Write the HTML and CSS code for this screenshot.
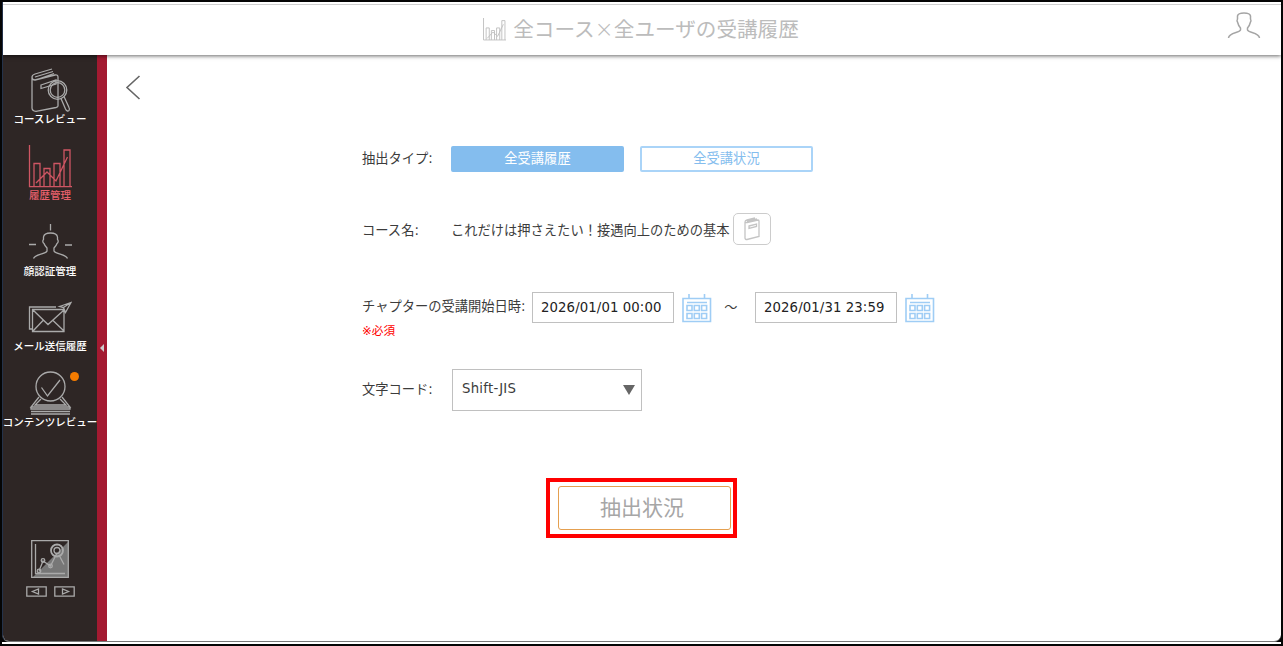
FILE: index.html
```html
<!DOCTYPE html>
<html lang="ja">

<head>
    <meta charset="UTF-8" />
    <title>全コース×全ユーザの受講履歴</title>
    <link rel="stylesheet" href="styles.css">
</head>

<body>
    <div class="app">
        <header class="header">
            <div class="header-title">
                <svg class="title-icon" width="23" height="23" viewBox="0 0 44 44">
                    <path d="M1 0V42H44M6 42V19h6v23M16 42V24h6v18M26 42V19h6v23M36 42V5h6v37M8 39L19 27L28 35L39 12" />
                </svg>
                <h1>全コース<span class="times">×</span>全ユーザの受講履歴</h1>
            </div>
            <svg class="user-icon" width="34" height="28" viewBox="0 0 34 28">
                <path d="M1.500 26C2 20 12.500 21 13.500 18V16C11.500 14 11 12 10.500 10C9.500 9 10 8 10.500 7V4C11 1.500 14 1 17 1S23 1.500 23.500 4V7C24 8 24.500 9 23.500 10C23 12 22.500 14 20.500 16V18C21.500 21 32 20 32.500 26" />
            </svg>
        </header>
        <div class="main">
            <nav class="sidebar">
                <ul class="menu">
                    <li>
                        <svg width="44" height="44" viewBox="0 0 44 44">
                            <path d="M4 9Q4 7 7 6L24 1M4 9Q4 12 7 12L27 7Q30 6.500 30 9V38Q30 39 28 39.500L8 43.300Q4 43 4 40V9M7 9L25 3.500M9 11.500L26 5.500M13 17L28 12V16L13 20.500Z" />
                            <circle cx="29.500" cy="22" r="9.300" />
                            <circle cx="29.500" cy="22" r="7.300" />
                            <path d="M33 30.500L37.500 41Q39 44 41 42.500Q42 41.500 41 39.500L36 28.500" />
                        </svg>
                        <span>コースレビュー</span>
                    </li>
                    <li class="active">
                        <svg width="44" height="44" viewBox="0 0 44 44">
                            <path d="M1.500 1V42.700H44M6 42V19.500h6v23M16 42V24.500h6v18M26 42V19.500h6v23M36 42V6h6v36.500M8 39L19 28L28 37L39.500 13" />
                        </svg>
                        <span>履歴管理</span>
                    </li>
                    <li>
                        <svg width="44" height="44" viewBox="0 0 44 44">
                            <path d="M22.500 4V10.500M1 24.500H8M37 25H44M5.500 38.500C8 33 18 34.500 19 31V28C17 26 16.500 25 16 23.500C14.500 22.500 14.500 20.500 15.500 19.500V17C16 14 19 13 22.500 13S29 14 29.500 17V19.500C30.500 20.500 30.500 22.500 29 23.500C28.500 25 28 26 26 28V31C27.500 34.500 37 33 39.500 38.500" />
                        </svg>
                        <span>顔認証管理</span>
                    </li>
                    <li>
                        <svg width="44" height="44" viewBox="0 0 44 44">
                            <path d="M4 34H1.500V12H28M4.500 14.500H36V36.500H4.500ZM5 15L20 29.500L36 15M5 36L15 25.500M36 36L25 25.500M31.500 11.500L43 7.500L37.500 17.500L35.500 12.500ZM35.500 12.500L43 7.500" />
                        </svg>
                        <span>メール送信履歴</span>
                    </li>
                    <li>
                        <svg width="44" height="44" viewBox="0 0 44 44">
                            <circle cx="22.500" cy="15.500" r="14.500" />
                            <path d="M13.500 16.500L19.500 25L32 9M11 26L3 36H42L34 26M13 28L7 34H38L32 28M3 36V38H42V36M3 40.500H42M3 43H42" />
                        </svg>
                        <span>コンテンツレビュー</span>
                        <i class="badge"></i>
                    </li>
                </ul>
                <div class="analysis">
                    <svg width="38" height="38" viewBox="0 0 38 38">
                        <path class="shade" d="M37 2V37H2Z" />
                        <path d="M.7 .7H37.300V37.300H.7ZM4.500 4V33.500H34M8 31L12 21L19.500 26L26 13M28 15L33 24.500" />
                        <circle cx="8" cy="31" r="1.800" />
                        <circle cx="12" cy="20.500" r="1.800" />
                        <circle cx="19.500" cy="26" r="1.800" />
                        <circle class="lens" cx="26" cy="10.500" r="6" />
                        <circle cx="26" cy="10.500" r="3" />
                    </svg>
                    <div class="pager">
                        <svg width="21" height="11" viewBox="0 0 21 11">
                            <path d="M.8 .8H20.200V10.200H.8ZM12.500 3V8L6.500 5.500Z" />
                        </svg>
                        <svg width="21" height="11" viewBox="0 0 21 11">
                            <path d="M.8 .8H20.200V10.200H.8ZM8.500 3V8L14.500 5.500Z" />
                        </svg>
                    </div>
                </div>
            </nav>
            <div class="side-bar-toggle"><i></i></div>
            <div class="content">
                <svg class="back" width="16" height="26" viewBox="0 0 16 26">
                    <path d="M14.500 2L2 13.500L14.500 25" />
                </svg>
                <div class="form">
                    <div class="row row-type">
                        <label>抽出タイプ:</label>
                        <div class="tabs">
                            <div class="tab selected">全受講履歴</div>
                            <div class="tab">全受講状況</div>
                        </div>
                    </div>
                    <div class="row row-course">
                        <label>コース名:</label>
                        <span>これだけは押さえたい！接遇向上のための基本</span>
                        <div class="book-btn">
                            <svg width="18" height="24" viewBox="0 0 18 24">
                                <path d="M2 5Q2 3.500 4 3L12 1M2 5Q2 6 4 5.500L15 3Q16 3 16 4V19.500L4 22.500Q2 22.500 2 21V5M4 4.500L14 2M6 9L13.500 7V9.500L6 11.500Z" />
                            </svg>
                        </div>
                    </div>
                    <div class="row row-date">
                        <label>チャプターの受講開始日時:</label>
                        <div class="date">2026/01/01 00:00</div>
                        <svg class="calendar" width="30" height="30" viewBox="0 0 30 30">
                            <path d="M1 5.500H28.500V28.500H1ZM7 1V5M22.500 1V5M5 9.500H25M5 12.500h5v5h-5ZM12.300 12.500h5v5h-5ZM19.600 12.500h5v5h-5ZM5 20.500h5v5h-5ZM12.300 20.500h5v5h-5ZM19.600 20.500h5v5h-5Z" />
                        </svg>
                        <span class="tilde">～</span>
                        <div class="date">2026/01/31 23:59</div>
                        <svg class="calendar" width="30" height="30" viewBox="0 0 30 30">
                            <path d="M1 5.500H28.500V28.500H1ZM7 1V5M22.500 1V5M5 9.500H25M5 12.500h5v5h-5ZM12.300 12.500h5v5h-5ZM19.600 12.500h5v5h-5ZM5 20.500h5v5h-5ZM12.300 20.500h5v5h-5ZM19.600 20.500h5v5h-5Z" />
                        </svg>
                    </div>
                    <p class="required">※必須</p>
                    <div class="row row-code">
                        <label>文字コード:</label>
                        <div class="select"><span>Shift-JIS</span><i></i></div>
                    </div>
                    <div class="submit-frame">
                        <div class="submit">抽出状況</div>
                    </div>
                </div>
            </div>
        </div>
    </div>
    <div class="bottom-edge"></div>
</body>

</html>
```
FILE: styles.css
```css
* {
    margin: 0;
    padding: 0;
    box-sizing: border-box;
}

body {
    width: 1283px;
    height: 646px;
    overflow: hidden;
    background: #050505;
    padding: 2px 2px 0 2px;
    font-family: "DejaVu Sans", "Noto Sans CJK JP", sans-serif;
    font-size: 13.27px;
    color: #3c3c3c;
}

svg {
    display: block;
    flex: none;
    fill: none;
    stroke: #aaa;
    stroke-width: 1.3;
}

.app {
    width: 1279px;
    height: 640px;
    background: #fff;
    border-left: 1px solid #24324a;
    border-bottom: 1px solid #777;
    border-radius: 0 0 7px 7px;
    overflow: hidden;
}

.bottom-edge {
    height: 2px;
    background: #fff;
}

.header {
    position: relative;
    height: 53px;
    background: #fff;
    box-shadow: 0 1px 4px rgba(0, 0, 0, 0.6);
    display: flex;
    align-items: center;
    justify-content: center;
}

.header::before {
    content: "";
    position: absolute;
    left: 0;
    right: 0;
    top: 2px;
    height: 1px;
    background: #d0d0d0;
}

.header-title {
    display: flex;
    align-items: center;
    gap: 7px;
    margin-right: 2px;
    padding-bottom: 2px;
}

.header h1 {
    font-family: "Noto Sans CJK JP", sans-serif;
    font-size: 20.6px;
    font-weight: 400;
    line-height: 30px;
    color: #bcbcbc;
    white-space: nowrap;
}

.header h1 .times {
    font-family: "DejaVu Sans", sans-serif;
    font-size: 23px;
    font-weight: 200;
    line-height: 20px;
}

.title-icon {
    stroke: #c0c0c0;
    stroke-width: 1.8;
    margin-top: 4px;
}

.user-icon {
    position: absolute;
    right: 20px;
    top: 10px;
    stroke: #a5a5a5;
    stroke-width: 1.5;
}

.main {
    display: flex;
    height: 586px;
}

.sidebar {
    width: 94px;
    background: #2e2625;
    display: flex;
    flex-direction: column;
    justify-content: space-between;
}

.menu {
    list-style: none;
    padding-top: 13px;
}

.menu li {
    position: relative;
    height: 75.8px;
    display: flex;
    flex-direction: column;
    align-items: center;
    font-family: "Noto Sans CJK JP", sans-serif;
    font-size: 10.5px;
    font-weight: 500;
    line-height: 14px;
    color: #fff;
    white-space: nowrap;
}

.menu .active {
    color: #e8606c;
}

.menu .active svg {
    stroke: #cf5663;
}

.badge {
    position: absolute;
    left: 67px;
    top: 1px;
    width: 9px;
    height: 9px;
    border-radius: 50%;
    background: #f57c00;
}

.analysis {
    display: flex;
    flex-direction: column;
    align-items: center;
    gap: 8px;
    padding-bottom: 44px;
}

.analysis .shade {
    fill: #777;
    stroke: none;
}

.analysis .lens {
    stroke-width: 1.8;
}

.pager {
    display: flex;
    gap: 7px;
}

.side-bar-toggle {
    width: 10px;
    background: #a31a31;
    display: flex;
    align-items: center;
    justify-content: center;
}

.side-bar-toggle i {
    border: 4px solid transparent;
    border-left: 0;
    border-right-color: #ccc;
}

.content {
    flex: 1;
    padding: 19px 0 0 18px;
}

.back {
    stroke: #666;
    stroke-width: 1.6;
}

.form {
    width: 600px;
    margin-left: 237px;
    padding-top: 46px;
}

.row {
    display: flex;
    align-items: center;
    white-space: nowrap;
}

.row label {
    width: 89px;
}

.row-type label,
.row-date label,
.row-code label {
    padding-bottom: 4px;
}

.row-type {
    height: 26px;
}

.tabs {
    display: flex;
    gap: 16px;
}

.tab {
    width: 173px;
    height: 26px;
    line-height: 22px;
    border: 2px solid #aad4f8;
    border-radius: 2px;
    text-align: center;
    color: #84bdee;
}

.tab.selected {
    background: #84bdee;
    border-color: #84bdee;
    color: #fff;
}

.row-course {
    height: 32px;
    margin-top: 41px;
}

.book-btn {
    width: 38px;
    height: 32px;
    margin-left: 3px;
    border: 1.5px solid #ccc;
    border-radius: 5px;
    display: flex;
    align-items: center;
    justify-content: center;
}

.book-btn svg {
    stroke: #c4c4c4;
}

.row-date {
    height: 31px;
    margin-top: 47px;
}

.row-date label {
    width: 170px;
}

.date {
    width: 142px;
    height: 31px;
    line-height: 30px;
    padding-left: 8px;
    border: 1px solid #c0c0c0;
    color: #222;
    letter-spacing: 0.1px;
}

.calendar {
    margin-left: 8px;
    stroke: #9fcdf5;
    stroke-width: 1.6;
}

.tilde {
    width: 43px;
    padding: 0 5px 2px 0;
    text-align: center;
}

.required {
    font-size: 11.7px;
    line-height: 16px;
    color: #f00;
}

.row-code {
    height: 42px;
    margin-top: 30px;
}

.row-code label {
    width: 90px;
}

.select {
    width: 190px;
    height: 42px;
    padding: 0 6px 3px 9px;
    border: 1px solid #c0c0c0;
    display: flex;
    align-items: center;
    justify-content: space-between;
}

.select span {
    letter-spacing: 0.25px;
}

.select i {
    margin-top: 3px;
    border: 6px solid transparent;
    border-top: 10px solid #666;
    border-bottom: 0;
}

.submit-frame {
    width: 191px;
    height: 60px;
    margin: 67px 0 0 184px;
    padding: 4px 2px 4px 8px;
    border: 4px solid #f00;
}

.submit {
    height: 44px;
    line-height: 39px;
    padding-right: 5px;
    border: 1.5px solid #e5a050;
    border-radius: 3px;
    text-align: center;
    font-family: "Noto Sans CJK JP", sans-serif;
    font-size: 21px;
    font-weight: 400;
    color: #a6a6a6;
}
```
